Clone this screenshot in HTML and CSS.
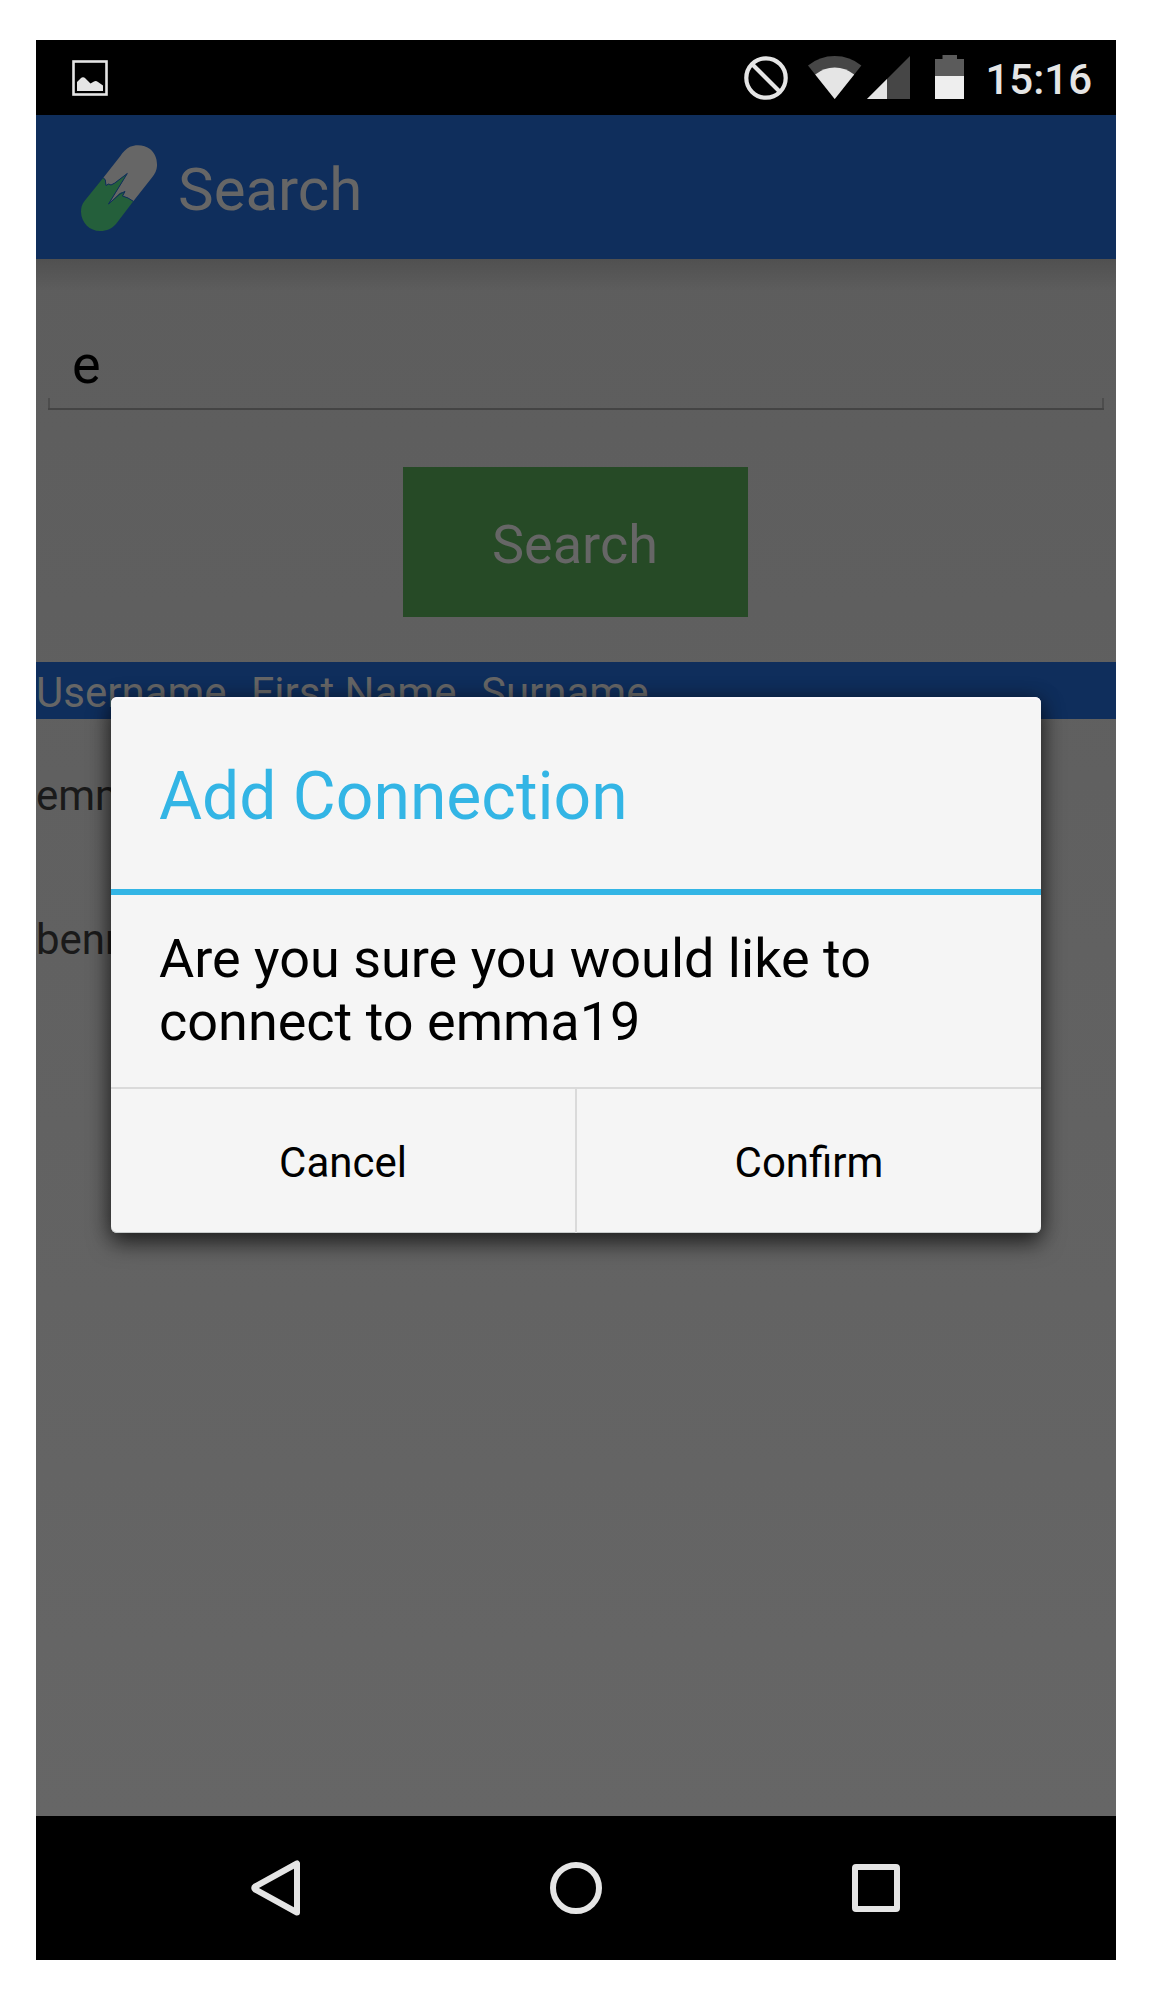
FILE: index.html
```html
<!DOCTYPE html>
<html lang="en">
<head>
<meta charset="utf-8">
<title>Search</title>
<link rel="stylesheet" href="styles.css">
</head>
<body>
<div class="phone">
  <header class="status-bar">
    <svg class="icon-picture" width="36" height="36" viewBox="0 0 36 36">
      <rect x="1.500" y="1.500" width="33" height="33" fill="none" stroke="#e5e5e5" stroke-width="2.600"/>
      <path d="M5 22L8.500 18.500Q11 16 13.500 18.500L18.500 23.500 22 21.500Q24 20.500 26 22L31 25.500V31H5Z" fill="#e5e5e5"/>
    </svg>
    <div class="status-right">
      <svg class="icon-none" width="44" height="44" viewBox="0 0 44 44" fill="none" stroke="#e5e5e5" stroke-width="4.200">
        <circle cx="22" cy="22" r="19.700"/>
        <path d="M8.200 8.200L35.800 35.800"/>
      </svg>
      <svg class="icon-wifi" width="54" height="44" viewBox="0 0 54 44">
        <path d="M0 10.500Q11.500 1 26.700 1T53.400 10.500L26.700 44Z" fill="#464646"/>
        <path d="M7.200 19.500Q16 12.500 26.700 12.500T46.200 19.500L26.700 44Z" fill="#e5e5e5"/>
      </svg>
      <svg class="icon-cell" width="43" height="44" viewBox="0 0 43 44">
        <path d="M43 1V44H0Z" fill="#464646"/>
        <path d="M20 24V44H0Z" fill="#e5e5e5"/>
      </svg>
      <svg class="icon-battery" width="29" height="44" viewBox="0 0 29 44">
        <path d="M7.500 0H22V4H29V44H0V4H7.500Z" fill="#5b5b5b"/>
        <path d="M0 21H29V44H0Z" fill="#eee"/>
      </svg>
      <span class="clock">15:16</span>
    </div>
  </header>

  <div class="action-bar">
    <svg class="logo" width="77" height="87" viewBox="81 145 77 87">
      <path d="M103.300 177.700L120 156.500C123 152 126 149 130 146.800C136 144 145 144.800 150 149C155 153 157.300 159 157 166C156.800 170 155 174 152 177.500L133.300 201.300 128 198 122.500 196 125 191.500 120 193 108.500 204 127.300 173.500 114.500 183.200 111 185 108.500 184 106 185.500 105.300 180Z" fill="#666"/>
      <path d="M103.300 177.700L84.500 201C81.500 205 81 208 81 212C81.300 223 90 231 100 231C107 231 112 228.500 116 224L133.300 201.300 128 198 122.500 196 125 191.500 120 193 108.500 204 127.300 173.500 114.500 183.200 111 185 108.500 184 106 185.500 105.300 180Z" fill="#245f3b"/>
      <path d="M103.300 177.700L105.300 180 106 185.500 108.500 184 111 185 114.500 183.200 127.300 173.500 108.500 204 120 194 125 191.500 122.500 196 128 198 133.300 201.300" fill="none" stroke="#0f2e5c" stroke-width="1"/>
    </svg>
    <h1 class="title">Search</h1>
  </div>

  <main class="content">
    <div class="field">e</div>
    <div class="search-button">Search</div>
    <div class="table-head"><span>Username</span><span>First Name</span><span>Surname</span></div>
    <div class="row">emma19</div>
    <div class="row">benn</div>
  </main>

  <nav class="nav-bar">
    <svg width="60" height="60" viewBox="0 0 60 60" fill="none" stroke="#e5e5e5" stroke-width="6" stroke-linejoin="round">
      <path d="M51 5.500V54.500L9.200 31.500Q7.200 30 9.200 28.500Z"/>
    </svg>
    <svg width="60" height="60" viewBox="0 0 60 60" fill="none" stroke="#e5e5e5" stroke-width="6">
      <circle cx="30" cy="30" r="23"/>
    </svg>
    <svg width="60" height="60" viewBox="0 0 60 60">
      <path d="M10 6H50Q54 6 54 10V50Q54 54 50 54H10Q6 54 6 50V10Q6 6 10 6ZM12 12V48H48V12Z" fill="#e5e5e5" fill-rule="evenodd"/>
    </svg>
  </nav>

  <section class="dialog">
    <h2 class="dialog-title">Add Connection</h2>
    <p class="dialog-message">Are you sure you would like to connect to emma19</p>
    <div class="dialog-actions">
      <div class="action">Cancel</div>
      <div class="action">Confirm</div>
    </div>
  </section>
</div>
</body>
</html>
```
FILE: styles.css
```css
* { box-sizing: border-box; }

body {
  margin: 0;
  padding: 40px 40px 36px 36px;
  background: #fff;
  font-family: Roboto, "Noto Sans", sans-serif;
}

svg { display: block; flex: none; }

.phone {
  position: relative;
  display: flex;
  flex-direction: column;
  width: 1080px;
  height: 1920px;
  overflow: hidden;
  background: #000;
}

.status-bar {
  display: flex;
  justify-content: space-between;
  height: 75px;
  padding: 15px 24px 0 36px;
}
.icon-picture { margin-top: 5px; }
.status-right { display: flex; }
.icon-none { margin: 1px 20px 0 0; }
.icon-wifi { margin-right: 5px; }
.icon-cell { margin-right: 25px; }
.icon-battery { margin-right: 21px; }
.clock {
  color: #e5e5e5;
  font-size: 42px;
  font-weight: 500;
  line-height: 49px;
}

.action-bar {
  display: flex;
  align-items: flex-start;
  height: 144px;
  padding: 30px 0 0 45px;
  background: #0f2e5c;
}
.title {
  margin: 10px 0 0 20px;
  color: #666;
  font-size: 60px;
  font-weight: 400;
  line-height: 70px;
}

.content {
  flex: 1;
  background:
    linear-gradient(rgba(0, 0, 0, 0.14), rgba(0, 0, 0, 0)) top / 100% 32px no-repeat,
    linear-gradient(#5d5d5d, #666);
}
.field {
  height: 151px;
  margin: 0 12px;
  padding: 74px 0 0 24px;
  background:
    linear-gradient(#444, #444) 0 100% / 100% 2px no-repeat,
    linear-gradient(#4d4d4d, #4d4d4d) 0 100% / 2px 12px no-repeat,
    linear-gradient(#4d4d4d, #4d4d4d) 100% 100% / 2px 12px no-repeat;
  color: #000;
  font-size: 54px;
  line-height: 63px;
}
.search-button {
  width: 345px;
  height: 150px;
  margin: 57px 0 45px 367px;
  padding: 5px 1px 0 0;
  background: #264a26;
  color: #666;
  font-size: 54px;
  line-height: 146px;
  text-align: center;
}
.table-head {
  display: flex;
  gap: 24.5px;
  height: 57px;
  padding-top: 6px;
  background: #0f2e5c;
  color: #666;
  font-size: 42px;
  line-height: 49px;
}
.row {
  height: 144px;
  padding-top: 52px;
  color: #1a1a1a;
  font-size: 42px;
  line-height: 49px;
}

.nav-bar {
  display: grid;
  grid-template-columns: repeat(3, 300px);
  place-content: center;
  place-items: center;
  height: 144px;
  background: #000;
}

.dialog {
  position: absolute;
  left: 75px;
  top: 657px;
  display: flex;
  flex-direction: column;
  width: 930px;
  height: 536px;
  border-radius: 6px;
  background: #f5f5f5;
  box-shadow: 0 10px 22px rgba(0, 0, 0, 0.6), 0 0 20px rgba(0, 0, 0, 0.3), inset 0 -1px #c8cccc, inset 0 2px #faf8fc;
}
.dialog-title {
  height: 198px;
  margin: 0;
  padding: 61px 48px 0;
  border-bottom: 6px solid #33b5e5;
  color: #33b5e5;
  font-size: 66px;
  font-weight: 400;
  line-height: 77px;
}
.dialog-message {
  height: 192px;
  margin: 0;
  padding: 32px 48px 0;
  color: #000;
  font-size: 54px;
  line-height: 63px;
}
.dialog-actions {
  display: grid;
  grid-template-columns: 466px 464px;
  height: 146px;
  border-top: 2px solid #dadada;
}
.action {
  padding-top: 49px;
  color: #000;
  font-size: 42px;
  line-height: 49px;
  text-align: center;
}
.action:first-child { border-right: 2px solid #dadada; }
```
